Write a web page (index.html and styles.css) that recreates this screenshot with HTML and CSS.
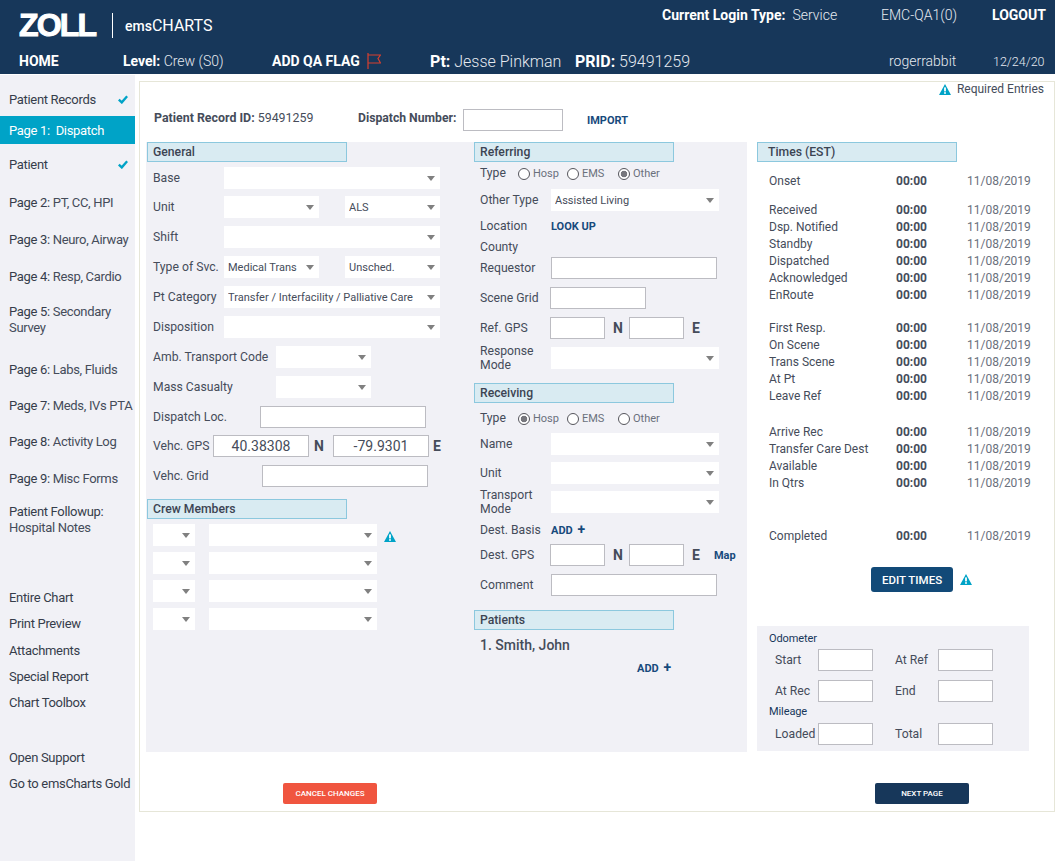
FILE: index.html
```html
<!DOCTYPE html>
<html lang="en">
<head>
<meta charset="utf-8">
<title>emsCHARTS - Dispatch</title>
<link rel="stylesheet" href="styles.css">
</head>
<body>
<svg class="defs" width="0" height="0" aria-hidden="true">
  <symbol id="warn" viewBox="0 0 12 11"><path d="M6 0 L12 11 L0 11 Z" fill="#00a3c7"/><rect x="5.1" y="3.4" width="1.8" height="4" fill="#fff"/><rect x="5.1" y="8.2" width="1.8" height="1.6" fill="#fff"/></symbol>
  <symbol id="check" viewBox="0 0 10 9"><path d="M0.8 4.6 L3.8 7.4 L9.2 1.2" fill="none" stroke="#00a3c7" stroke-width="2.4"/></symbol>
</svg>
<header class="top">
  <div class="top-a">
    <div class="logo"><span class="zoll">ZOLL</span><span class="reg">.</span></div>
    <div class="logo-sep"></div>
    <div class="brand"><b>ems</b>CHARTS</div>
    <div class="login"><b>Current Login Type:</b><span class="service">Service</span></div>
    <div class="emc">EMC-QA1(0)</div>
    <b class="logout">LOGOUT</b>
  </div>
  <div class="top-b">
    <b class="home">HOME</b>
    <div class="level"><b>Level:</b> Crew (S0)</div>
    <b class="qa">ADD QA FLAG</b>
    <svg class="flag" width="14" height="16" viewBox="0 0 14 16"><path d="M1 0 V16 M1 2 H13.5 L11 5.5 L13.5 10 H1" fill="none" stroke="#d8402f" stroke-width="1.2"/></svg>
    <div class="pt"><b>Pt:</b> Jesse Pinkman</div>
    <div class="prid"><b>PRID:</b> 59491259</div>
    <div class="user">rogerrabbit</div>
    <div class="date">12/24/20</div>
  </div>
</header>
<div class="app">
  <nav class="side">
    <div class="nav s1"><span class="dark">Patient Records</span><svg class="chk" width="10" height="9"><use href="#check"/></svg></div>
    <div class="nav active s2"><span>Page 1:&nbsp; Dispatch</span></div>
    <div class="nav s3"><span class="dark">Patient</span><svg class="chk" width="10" height="9"><use href="#check"/></svg></div>
    <div class="nav s4"><span><i>Page 2:</i> PT, CC, HPI</span></div>
    <div class="nav s5"><span><i>Page 3:</i> Neuro, Airway</span></div>
    <div class="nav s5"><span><i>Page 4:</i> Resp, Cardio</span></div>
    <div class="nav two s6"><span><i>Page 5:</i> Secondary Survey</span></div>
    <div class="nav s7"><span><i>Page 6:</i> Labs, Fluids</span></div>
    <div class="nav s8"><span><i>Page 7:</i> Meds, IVs PTA</span></div>
    <div class="nav s8"><span><i>Page 8:</i> Activity Log</span></div>
    <div class="nav s5"><span><i>Page 9:</i> Misc Forms</span></div>
    <div class="nav two s9"><span><i>Patient Followup:</i> Hospital Notes</span></div>
    <div class="nav low s10"><span class="dark">Entire Chart</span></div>
    <div class="nav low"><span class="dark">Print Preview</span></div>
    <div class="nav low s11"><span class="dark">Attachments</span></div>
    <div class="nav low"><span class="dark">Special Report</span></div>
    <div class="nav low"><span class="dark">Chart Toolbox</span></div>
    <div class="nav low s12"><span class="dark">Open Support</span></div>
    <div class="nav low"><span class="dark">Go to emsCharts Gold</span></div>
  </nav>
  <main class="main">
    <div class="req"><svg width="12" height="11"><use href="#warn"/></svg><span>Required Entries</span></div>
    <div class="rec">
      <div class="rec-id"><b>Patient Record ID:</b> 59491259</div>
      <b class="rec-d">Dispatch Number:</b>
      <input class="inp w100" type="text" aria-label="Dispatch Number">
      <a class="link import">IMPORT</a>
    </div>
    <div class="body">
      <div class="panel">
        <section class="col1">
          <h3 class="hd">General</h3>
          <div class="row m5"><label class="lb">Base</label><span class="sel w216"><select><option></option></select></span></div>
          <div class="row m7"><label class="lb">Unit</label><span class="sel w95"><select><option></option></select></span><span class="sel w95 ml26"><select><option>ALS</option></select></span></div>
          <div class="row m8"><label class="lb">Shift</label><span class="sel w216"><select><option></option></select></span></div>
          <div class="row m8"><label class="lb">Type of Svc.</label><span class="sel w95"><select><option>Medical Trans</option></select></span><span class="sel w95 ml26"><select><option>Unsched.</option></select></span></div>
          <div class="row m8"><label class="lb">Pt Category</label><span class="sel w216"><select><option>Transfer / Interfacility / Palliative Care</option></select></span></div>
          <div class="row m8"><label class="lb">Disposition</label><span class="sel w216"><select><option></option></select></span></div>
          <div class="row m8"><label class="lb lb-amb">Amb. Transport Code</label><span class="sel w95"><select><option></option></select></span></div>
          <div class="row m8"><label class="lb lb-amb">Mass Casualty</label><span class="sel w95"><select><option></option></select></span></div>
          <div class="row m8"><label class="lb lb-loc">Dispatch Loc.</label><input class="inp w166" type="text"></div>
          <div class="row m7"><label class="lb lb-gps">Vehc. GPS</label><input class="inp w96 val" type="text" value="40.38308"><b class="cardinal n1">N</b><input class="inp w96 val" type="text" value="-79.9301"><b class="cardinal e1">E</b></div>
          <div class="row m8"><label class="lb lb-grid">Vehc. Grid</label><input class="inp w166" type="text"></div>
          <h3 class="hd m12">Crew Members</h3>
          <div class="row crew m5"><span class="sel w42"><select><option></option></select></span><span class="sel w168 ml14"><select><option></option></select></span><svg class="crew-warn" width="12" height="11"><use href="#warn"/></svg></div>
          <div class="row crew m6"><span class="sel w42"><select><option></option></select></span><span class="sel w168 ml14"><select><option></option></select></span></div>
          <div class="row crew m6"><span class="sel w42"><select><option></option></select></span><span class="sel w168 ml14"><select><option></option></select></span></div>
          <div class="row crew m6"><span class="sel w42"><select><option></option></select></span><span class="sel w168 ml14"><select><option></option></select></span></div>
        </section>
        <section class="col2">
          <h3 class="hd">Referring</h3>
          <div class="row h20 m1"><label class="lb lb-type">Type</label><span class="radios"><label class="r r1"><input type="radio" name="ref">Hosp</label><label class="r r2"><input type="radio" name="ref">EMS</label><label class="r r3"><input type="radio" name="ref" checked>Other</label></span></div>
          <div class="row m6"><label class="lb">Other Type</label><span class="sel w168"><select><option>Assisted Living</option></select></span></div>
          <div class="row h16 m7"><label class="lb">Location</label><a class="link">LOOK UP</a></div>
          <div class="row h16 m5"><label class="lb">County</label></div>
          <div class="row m2"><label class="lb">Requestor</label><input class="inp w166" type="text"></div>
          <div class="row m8"><label class="lb lb70">Scene Grid</label><input class="inp w96" type="text"></div>
          <div class="row m8"><label class="lb lb70">Ref. GPS</label><input class="inp w55" type="text"><b class="cardinal n2">N</b><input class="inp w55" type="text"><b class="cardinal e2">E</b></div>
          <div class="row m8"><label class="lb tall">Response Mode</label><span class="sel w168"><select><option></option></select></span></div>
          <h3 class="hd m14">Receiving</h3>
          <div class="row h20 m5"><label class="lb lb-type">Type</label><span class="radios"><label class="r r1"><input type="radio" name="rec" checked>Hosp</label><label class="r r2"><input type="radio" name="rec">EMS</label><label class="r r3"><input type="radio" name="rec">Other</label></span></div>
          <div class="row m5"><label class="lb">Name</label><span class="sel w168"><select><option></option></select></span></div>
          <div class="row m7"><label class="lb">Unit</label><span class="sel w168"><select><option></option></select></span></div>
          <div class="row m7"><label class="lb tall">Transport Mode</label><span class="sel w168"><select><option></option></select></span></div>
          <div class="row h16 m9"><label class="lb">Dest. Basis</label><a class="link">ADD <span class="plus">+</span></a></div>
          <div class="row m6"><label class="lb lb70">Dest. GPS</label><input class="inp w55" type="text"><b class="cardinal n2">N</b><input class="inp w55" type="text"><b class="cardinal e2">E</b><a class="link map">Map</a></div>
          <div class="row m8"><label class="lb">Comment</label><input class="inp w166" type="text"></div>
          <h3 class="hd m14">Patients</h3>
          <div class="pat">1. Smith, John</div>
          <div class="pat-add"><a class="link">ADD <span class="plus">+</span></a></div>
        </section>
      </div>
      <section class="times">
        <h3 class="hd hd-t">Times (EST)</h3>
        <div class="tgrp t11"><div class="trow"><span>Onset</span><b>00:00</b><em>11/08/2019</em></div></div>
        <div class="tgrp t12">
          <div class="trow"><span>Received</span><b>00:00</b><em>11/08/2019</em></div>
          <div class="trow"><span>Dsp. Notified</span><b>00:00</b><em>11/08/2019</em></div>
          <div class="trow"><span>Standby</span><b>00:00</b><em>11/08/2019</em></div>
          <div class="trow"><span>Dispatched</span><b>00:00</b><em>11/08/2019</em></div>
          <div class="trow"><span>Acknowledged</span><b>00:00</b><em>11/08/2019</em></div>
          <div class="trow"><span>EnRoute</span><b>00:00</b><em>11/08/2019</em></div>
        </div>
        <div class="tgrp t16">
          <div class="trow"><span>First Resp.</span><b>00:00</b><em>11/08/2019</em></div>
          <div class="trow"><span>On Scene</span><b>00:00</b><em>11/08/2019</em></div>
          <div class="trow"><span>Trans Scene</span><b>00:00</b><em>11/08/2019</em></div>
          <div class="trow"><span>At Pt</span><b>00:00</b><em>11/08/2019</em></div>
          <div class="trow"><span>Leave Ref</span><b>00:00</b><em>11/08/2019</em></div>
        </div>
        <div class="tgrp t19">
          <div class="trow"><span>Arrive Rec</span><b>00:00</b><em>11/08/2019</em></div>
          <div class="trow"><span>Transfer Care Dest</span><b>00:00</b><em>11/08/2019</em></div>
          <div class="trow"><span>Available</span><b>00:00</b><em>11/08/2019</em></div>
          <div class="trow"><span>In Qtrs</span><b>00:00</b><em>11/08/2019</em></div>
        </div>
        <div class="tgrp t36"><div class="trow"><span>Completed</span><b>00:00</b><em>11/08/2019</em></div></div>
        <div class="edit"><button class="btn-edit" type="button">EDIT TIMES</button><svg width="12" height="11"><use href="#warn"/></svg></div>
        <div class="odo">
          <div class="odo-t">Odometer</div>
          <div class="odo-r o3"><label>Start</label><input class="inp w55" type="text"><label class="odo-2">At Ref</label><input class="inp w55" type="text"></div>
          <div class="odo-r o9"><label>At Rec</label><input class="inp w55" type="text"><label class="odo-2">End</label><input class="inp w55" type="text"></div>
          <div class="odo-t o3">Mileage</div>
          <div class="odo-r o4"><label>Loaded</label><input class="inp w55" type="text"><label class="odo-2">Total</label><input class="inp w55" type="text"></div>
        </div>
      </section>
    </div>
    <div class="foot">
      <button class="btn cancel" type="button">CANCEL CHANGES</button>
      <button class="btn next" type="button">NEXT PAGE</button>
    </div>
  </main>
</div>
</body>
</html>
```
FILE: styles.css
```css
* { box-sizing: border-box; }
html, body { margin: 0; padding: 0; }
body { width: 1055px; height: 861px; overflow: hidden; background: #fff; font-family: Roboto, "Liberation Sans", sans-serif; font-size: 12.2px; color: #454c5a; }
.defs { position: absolute; }
b { font-weight: 700; }

/* header */
.top { height: 74px; background: #17375a; color: #e6eaf0; }
.top b { color: #fff; }
.top-a { height: 48px; display: flex; padding-left: 19px; }
.logo { width: 84px; margin-top: 9px; height: 32px; line-height: 32px; color: #fff; white-space: nowrap; }
.zoll { font-family: "Liberation Sans", sans-serif; font-weight: 700; font-size: 32px; letter-spacing: -1.8px; -webkit-text-stroke: 1px #fff; }
.reg { font-size: 8px; color: #9fb0c4; }
.logo-sep { width: 1px; height: 25px; background: #fff; margin: 13px 0 0 9px; }
.brand { margin: 15px 0 0 12px; width: 100px; height: 22px; line-height: 22px; font-size: 16px; color: #fff; white-space: nowrap; font-weight: 400; }
.brand b { font-weight: 500; font-size: 14px; }
.login { margin: 6px 0 0 437px; width: 219px; line-height: 18px; font-size: 14px; white-space: nowrap; font-weight: 300; }
.service { margin-left: 7px; }
.emc { margin: 6px 0 0 0; width: 111px; line-height: 18px; font-size: 14px; font-weight: 300; }
.logout { margin-top: 6px; line-height: 18px; font-size: 14px; }
.top-b { height: 26px; display: flex; align-items: center; padding-left: 19px; font-size: 14.5px; white-space: nowrap; font-weight: 300; }
.home { width: 104px; font-size: 14px; }
.level { width: 149px; font-size: 14px; }
.qa { width: 95px; font-size: 14px; }
.flag { margin-bottom: 1px; }
.pt { margin-left: 49px; width: 145px; font-size: 16px; }
.prid { width: 314px; font-size: 16px; }
.user { width: 104px; font-size: 14px; }
.date { font-size: 12.5px; }

/* sidebar */
.app { display: flex; height: 787px; margin-top: 1px; }
.side { width: 135px; flex: none; background: #f1f1f6; padding-top: 10px; font-size: 13px; letter-spacing: -0.32px; color: #454c5a; }
.nav { height: 28px; display: flex; align-items: center; justify-content: space-between; padding: 0 0 0 9px; line-height: 16px; }
.nav span { padding-top: 2px; }
.chk { margin-right: 7px; flex: none; }
.nav i { font-style: normal; color: #363d4b; }
.nav .dark { color: #363d4b; }
.nav.active { background: #00a3c7; color: #fff; }
.nav.two { height: 32px; }
.nav.low { height: 26px; white-space: nowrap; }
.s1 { margin-top: 0; }
.s2 { margin-top: 3px; }
.s3 { margin-top: 6px; }
.s4 { margin-top: 10px; }
.s5 { margin-top: 9px; }
.s6 { margin-top: 13px; }
.s7 { margin-top: 20px; }
.s8 { margin-top: 8px; }
.s9 { margin-top: 11px; }
.s10 { margin-top: 49px; }
.s11 { margin-top: 1px; }
.s12 { margin-top: 29px; }

/* main */
.main { width: 916px; height: 731px; margin: 6px 0 0 4px; border: 1px solid #e6e6d8; display: flex; flex-direction: column; }
.req { height: 14px; display: flex; align-items: center; justify-content: flex-end; gap: 6px; padding-right: 10px; font-size: 12px; color: #454c5a; }
.rec { height: 22px; margin-top: 13px; display: flex; align-items: center; padding-left: 14px; }
.rec-id { width: 204px; margin-bottom: 5px; font-size: 12.4px; }
.rec-d { width: 105px; margin-bottom: 5px; }
.link { color: #174a7c; font-weight: 700; font-size: 11px; white-space: nowrap; }
.import { margin-left: 24px; }
.plus { font-size: 14px; margin-left: 2px; line-height: 10px; }
.body { display: flex; height: 610px; margin: 11px 0 0 6px; }
.panel { width: 601px; background: #f1f1f6; display: flex; }
.col1 { width: 328px; padding-left: 1px; }
.col2 { width: 273px; }
.hd { margin: 0; width: 200px; height: 20px; line-height: 18px; padding-left: 5px; border: 1px solid #8cc8de; background: #d9ebf2; font-size: 12.2px; font-weight: 500; color: #3c4452; }
.row { display: flex; align-items: center; height: 22px; padding-left: 6px; }
.h20 { height: 20px; }
.h16 { height: 16px; }
.m1 { margin-top: 1px; } .m2 { margin-top: 2px; } .m5 { margin-top: 5px; } .m6 { margin-top: 6px; } .m7 { margin-top: 7px; }
.m8 { margin-top: 8px; } .m9 { margin-top: 9px; } .m12 { margin-top: 12px; } .m14 { margin-top: 14px; }
.lb { width: 71px; flex: none; white-space: nowrap; line-height: 14px; }
.lb70 { width: 70px; }
.lb-amb { width: 123px; }
.lb-loc { width: 107px; }
.lb-gps { width: 60px; }
.lb-grid { width: 109px; }
.lb-type { width: 38px; }
.tall { white-space: normal; }
.sel { position: relative; display: block; height: 22px; flex: none; background: #fff; }
.sel::after { content: ""; position: absolute; right: 5px; top: 9px; border-left: 4px solid transparent; border-right: 4px solid transparent; border-top: 5px solid #808080; }
.sel select { appearance: none; -webkit-appearance: none; display: block; width: 100%; height: 22px; border: 0; background: transparent; padding: 0 14px 0 4px; font: 11px Roboto, sans-serif; color: #454c5a; outline: 0; }
.w216 { width: 216px; } .w95 { width: 95px; } .w42 { width: 42px; } .w168 { width: 168px; }
.ml26 { margin-left: 26px; } .ml14 { margin-left: 14px; }
.crew { padding-left: 6px; }
.crew-warn { margin-left: 7px; margin-top: 3px; }
.inp { display: block; height: 22px; flex: none; border: 1px solid #bcbcc2; background: #fff; padding: 0; font: 14px Roboto, sans-serif; color: #454c5a; outline: 0; }
.val { text-align: center; }
.w100 { width: 100px; } .w166 { width: 166px; } .w96 { width: 96px; } .w55 { width: 55px; }
.cardinal { font-size: 14px; color: #454c5a; }
.n1 { width: 24px; padding-left: 5px; }
.e1 { padding-left: 4px; }
.n2 { width: 24px; padding-left: 8px; }
.e2 { padding-left: 8px; }
.map { margin-left: 14px; }
.radios { display: block; position: relative; height: 20px; width: 160px; }
.r { position: absolute; top: 0; display: flex; align-items: center; height: 20px; font-size: 11px; color: #6a707c; }
.r input { appearance: none; -webkit-appearance: none; width: 12px; height: 12px; margin: 1px 3px 0 0; border: 1px solid #55555c; border-radius: 50%; background: #fff; }
.r input:checked { background: radial-gradient(circle, #77777d 0 3px, #fff 3.6px); }
.r1 { left: 0; } .r2 { left: 49px; } .r3 { left: 100px; }
.pat { margin-top: 6px; height: 18px; line-height: 18px; padding-left: 6px; font-size: 14px; font-weight: 500; }
.pat-add { margin-top: 6px; height: 16px; line-height: 16px; padding-left: 163px; }

/* times */
.times { width: 272px; margin-left: 10px; }
.hd-t { width: 200px; padding-left: 10px; }
.trow { height: 17px; line-height: 17px; display: flex; padding-left: 12px; white-space: nowrap; font-size: 12px; }
.trow span { width: 127px; flex: none; }
.trow b { width: 71px; flex: none; font-weight: 700; }
.trow em { font-style: normal; color: #6a707c; }
.t11 { margin-top: 11px; } .t12 { margin-top: 12px; } .t16 { margin-top: 16px; } .t19 { margin-top: 19px; } .t36 { margin-top: 36px; }
.edit { margin-top: 22px; padding-left: 114px; display: flex; align-items: center; gap: 7px; }
.btn-edit { width: 82px; height: 25px; border: 0; border-radius: 3px; background: #124a78; color: #fff; font: 500 11.5px Roboto, sans-serif; padding: 0; }
.odo { height: 125px; margin-top: 34px; background: #f1f1f6; padding: 6px 0 0 12px; }
.odo-t { height: 14px; line-height: 14px; color: #17375a; font-size: 11px; letter-spacing: -0.1px; }
.odo-r { display: flex; align-items: center; height: 22px; padding-left: 6px; }
.odo-r label { width: 43px; white-space: nowrap; }
.odo-r .odo-2 { margin-left: 22px; }
.o3 { margin-top: 3px; } .o4 { margin-top: 4px; } .o9 { margin-top: 9px; }

/* footer */
.foot { margin-top: 31px; padding-left: 143px; display: flex; gap: 498px; }
.btn { width: 94px; height: 21px; border: 0; border-radius: 2px; color: #fff; font: 500 8px Roboto, sans-serif; padding: 0; }
.cancel { background: #f0553f; }
.next { background: #17375a; }
```
